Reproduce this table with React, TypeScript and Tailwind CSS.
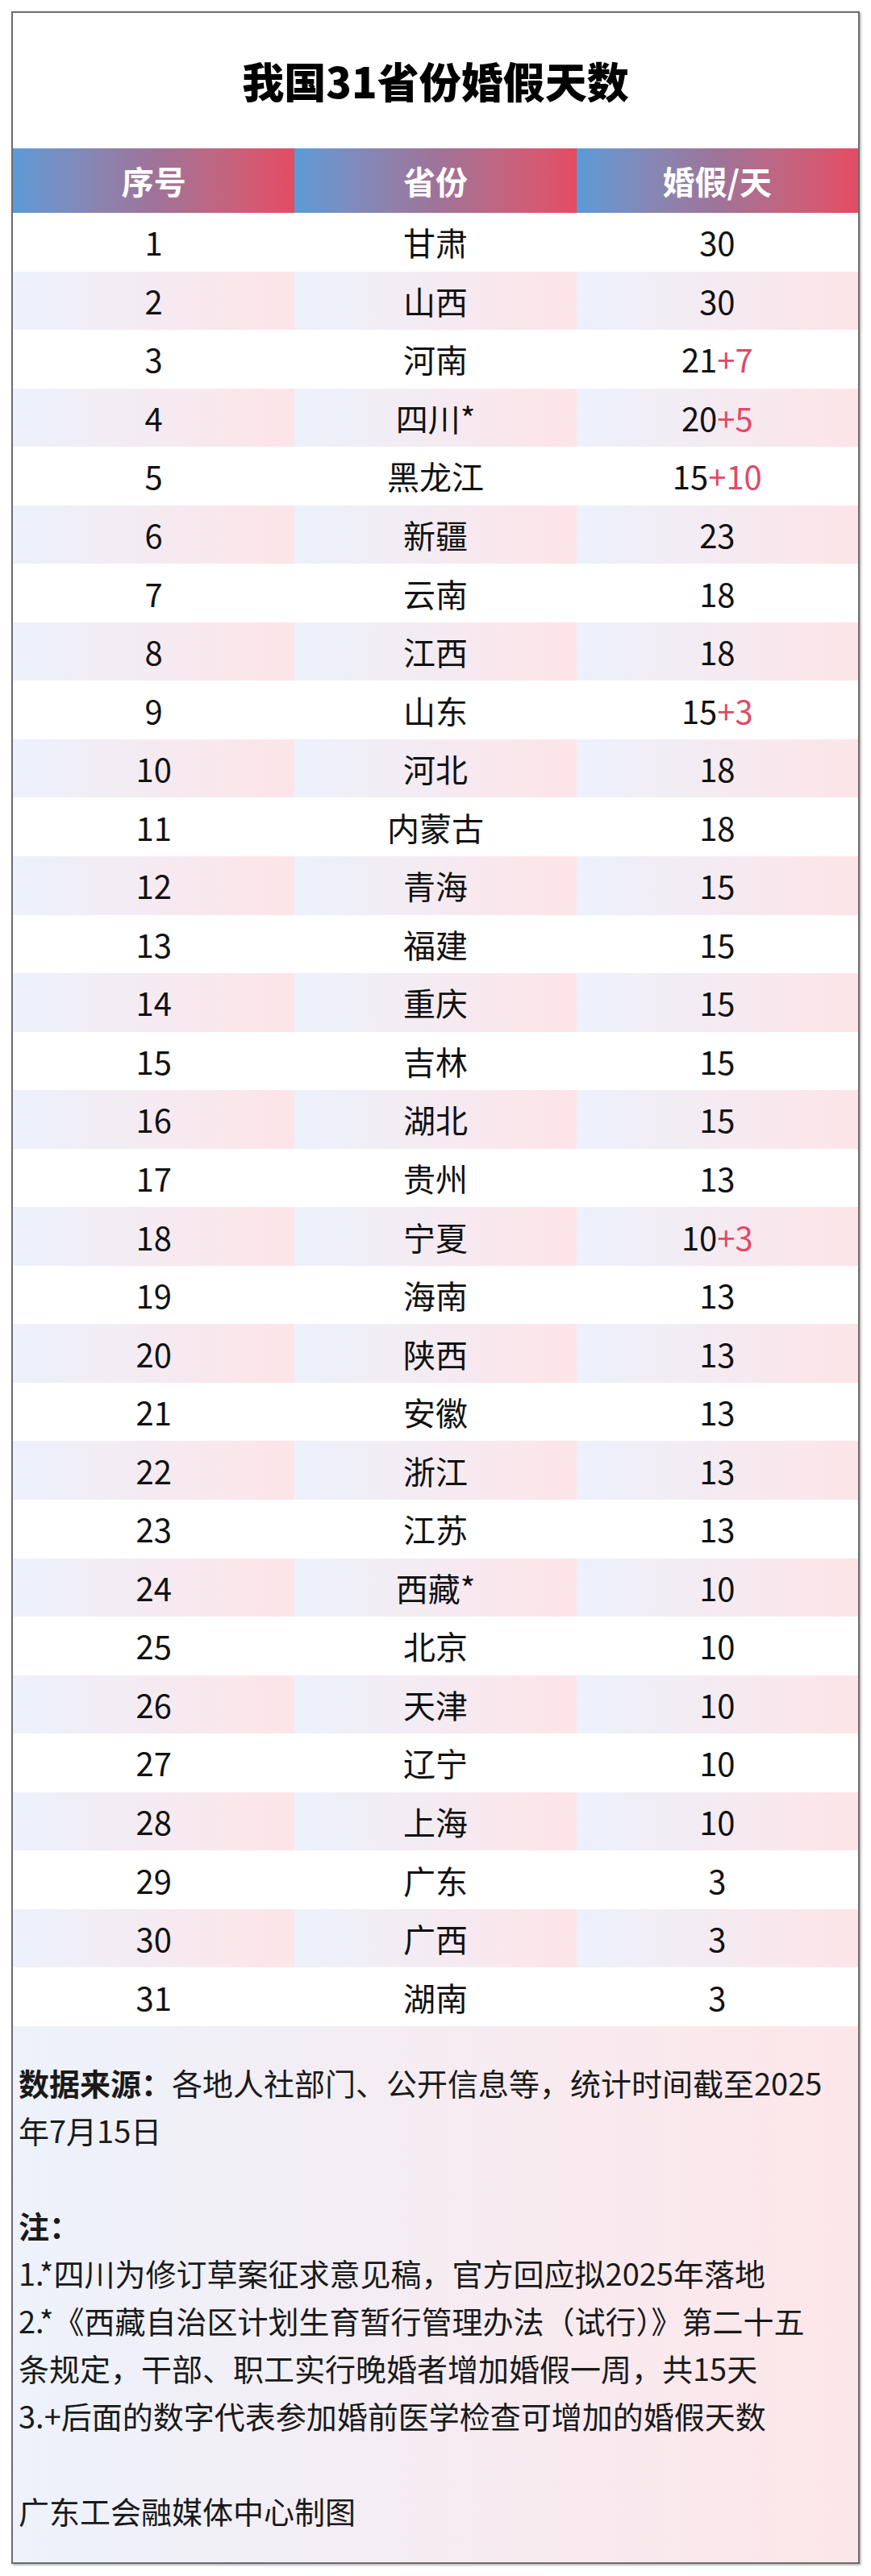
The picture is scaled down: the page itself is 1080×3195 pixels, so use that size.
const rows: { n: number; name: string; base: string; extra?: string }[] = [
  { n: 1, name: "甘肃", base: "30" },
  { n: 2, name: "山西", base: "30" },
  { n: 3, name: "河南", base: "21", extra: "+7" },
  { n: 4, name: "四川*", base: "20", extra: "+5" },
  { n: 5, name: "黑龙江", base: "15", extra: "+10" },
  { n: 6, name: "新疆", base: "23" },
  { n: 7, name: "云南", base: "18" },
  { n: 8, name: "江西", base: "18" },
  { n: 9, name: "山东", base: "15", extra: "+3" },
  { n: 10, name: "河北", base: "18" },
  { n: 11, name: "内蒙古", base: "18" },
  { n: 12, name: "青海", base: "15" },
  { n: 13, name: "福建", base: "15" },
  { n: 14, name: "重庆", base: "15" },
  { n: 15, name: "吉林", base: "15" },
  { n: 16, name: "湖北", base: "15" },
  { n: 17, name: "贵州", base: "13" },
  { n: 18, name: "宁夏", base: "10", extra: "+3" },
  { n: 19, name: "海南", base: "13" },
  { n: 20, name: "陕西", base: "13" },
  { n: 21, name: "安徽", base: "13" },
  { n: 22, name: "浙江", base: "13" },
  { n: 23, name: "江苏", base: "13" },
  { n: 24, name: "西藏*", base: "10" },
  { n: 25, name: "北京", base: "10" },
  { n: 26, name: "天津", base: "10" },
  { n: 27, name: "辽宁", base: "10" },
  { n: 28, name: "上海", base: "10" },
  { n: 29, name: "广东", base: "3" },
  { n: 30, name: "广西", base: "3" },
  { n: 31, name: "湖南", base: "3" },
];

const headers = ["序号", "省份", "婚假/天"];

function Cell({ shaded, children }: { shaded: boolean; children: React.ReactNode }) {
  return (
    <div
      className={
        shaded
          ? "flex items-center justify-center bg-gradient-to-r from-[#ecf1fb] to-[#fde4e8]"
          : "flex items-center justify-center bg-white"
      }
    >
      {children}
    </div>
  );
}

export default function App() {
  return (
    <div
      className="w-[1080px] h-[3195px] bg-white pt-[14px] px-[14px]"
      style={{ fontFamily: '"Noto Sans CJK SC", "Noto Sans", sans-serif' }}
    >
      <div className="border-2 border-[#6b6b6b] shadow-[2px_2px_2px_rgba(0,0,0,0.25)] bg-white">
        {/* Title */}
        <div className="h-[168px] flex items-center justify-center">
          <h1 className="text-[52px] font-black text-black leading-none">我国31省份婚假天数</h1>
        </div>

        {/* Header */}
        <div className="grid grid-cols-3 h-[80px]">
          {headers.map((h) => (
            <div
              key={h}
              className="flex items-center justify-center bg-gradient-to-r from-[#5a9bd6] via-[#9e7399] to-[#e54a63]"
            >
              <span className="text-[40px] font-bold text-white leading-none">{h}</span>
            </div>
          ))}
        </div>

        {/* Rows */}
        {rows.map((r) => {
          const shaded = r.n % 2 === 0;
          return (
            <div key={r.n} className="grid grid-cols-3 h-[72.55px] text-[40px] text-[#111] leading-none">
              <Cell shaded={shaded}>{r.n}</Cell>
              <Cell shaded={shaded}>{r.name}</Cell>
              <Cell shaded={shaded}>
                <span>
                  {r.base}
                  {r.extra && <span className="text-[#e04a68]">{r.extra}</span>}
                </span>
              </Cell>
            </div>
          );
        })}

        {/* Footer notes */}
        <div className="bg-gradient-to-r from-[#edf2fb] to-[#fde6e9] pt-[40px] pb-[35px] px-[7px] text-[38px] leading-[59px] text-[#1a1a1a] whitespace-nowrap">
          <p>
            <span className="font-bold">数据来源：</span>各地人社部门、公开信息等，统计时间截至2025
          </p>
          <p>年7月15日</p>
          <p>&nbsp;</p>
          <p className="font-bold">注：</p>
          <p>1.*四川为修订草案征求意见稿，官方回应拟2025年落地</p>
          <p>2.*《西藏自治区计划生育暂行管理办法（试行）》第二十五</p>
          <p>条规定，干部、职工实行晚婚者增加婚假一周，共15天</p>
          <p>3.+后面的数字代表参加婚前医学检查可增加的婚假天数</p>
          <p>&nbsp;</p>
          <p>广东工会融媒体中心制图</p>
        </div>
      </div>
    </div>
  );
}
